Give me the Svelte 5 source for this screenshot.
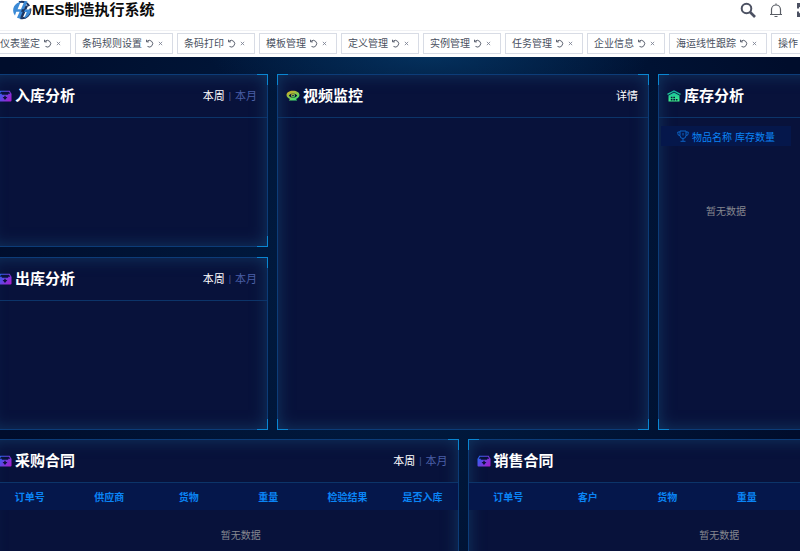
<script lang="ts">
  interface Panel {
    title: string;
    icon: string;
    area: string;
    columns?: string[];
    period?: boolean;
  }

  const tabs: string[] = [
    '仪表鉴定',
    '条码规则设置',
    '条码打印',
    '模板管理',
    '定义管理',
    '实例管理',
    '任务管理',
    '企业信息',
    '海运线性跟踪',
    '操作',
  ];

  const panels: Panel[] = [
    { title: '入库分析', icon: 'box', area: 'inbound', period: true },
    { title: '出库分析', icon: 'box', area: 'outbound', period: true },
    { title: '视频监控', icon: 'eye', area: 'video' },
    { title: '库存分析', icon: 'store', area: 'stock' },
  ];

  const contracts: Panel[] = [
    {
      title: '采购合同',
      icon: 'box',
      area: 'purchase',
      period: true,
      columns: ['订单号', '供应商', '货物', '重量', '检验结果', '是否入库'],
    },
    {
      title: '销售合同',
      icon: 'box',
      area: 'sales',
      columns: ['订单号', '客户', '货物', '重量', '', ''],
    },
  ];

  let openTabs = $state(tabs);
  let periods = $state<Record<string, string>>({});

  function closeTab(name: string) {
    openTabs = openTabs.filter(tab => tab !== name);
  }
</script>

{#snippet panelIcon(name: string)}
  {#if name === 'box'}
    <svg class="panel-icon" viewBox="0 0 14 12" aria-hidden="true">
      <defs>
        <linearGradient id="violet" gradientUnits="userSpaceOnUse" x1="0" y1="2" x2="13" y2="11">
          <stop offset="0" stop-color="#1f6cf5" />
          <stop offset="0.5" stop-color="#6a40e0" />
          <stop offset="1" stop-color="#a91bcb" />
        </linearGradient>
      </defs>
      <path fill="none" stroke="url(#violet)" stroke-width="1.1" d="M1 4.200 2.600 1.300h8.800L13 4.200" />
      <path fill="url(#violet)" d="M.5 3.800h3.300v.900h6.400v-.900h3.300v6.800a.9.9 0 0 1-.9.9H1.400a.9.9 0 0 1-.9-.9z" />
      <path fill="#0a123c" d="M6.300 5.800h1.400v1.300h1.700L7 9.900 4.600 7.100h1.700z" />
    </svg>
  {:else if name === 'eye'}
    <svg class="panel-icon" viewBox="0 0 14 12" aria-hidden="true">
      <defs>
        <linearGradient id="lime" x1="0" y1="0" x2="0.6" y2="1">
          <stop offset="0" stop-color="#e0a51c" />
          <stop offset="1" stop-color="#41e070" />
        </linearGradient>
      </defs>
      <path fill="url(#lime)" d="M7 .8c3.700 0 6.500 1.800 6.500 4.300 0 1.800-1.400 3.200-3.500 3.800l1.200 1.600H2.800L4 8.900C1.900 8.300.5 6.900.5 5.100.5 2.600 3.300.8 7 .8z" />
      <path fill="#0a123c" d="M2.800 5.600C4.600 2.700 9.400 2.700 11.200 5.600 9.400 8.500 4.600 8.500 2.800 5.600z" />
      <circle cx="7" cy="5.600" r="2" fill="url(#lime)" />
      <circle cx="7" cy="5.600" r=".8" fill="#0a123c" />
    </svg>
  {:else}
    <svg class="panel-icon" viewBox="0 0 14 12" aria-hidden="true">
      <defs>
        <linearGradient id="mint" gradientUnits="userSpaceOnUse" x1="0" y1="1" x2="0" y2="11">
          <stop offset="0" stop-color="#12b5a0" />
          <stop offset="1" stop-color="#3df08a" />
        </linearGradient>
      </defs>
      <path fill="none" stroke="url(#mint)" stroke-width="1.200" d="M.5 4.400 7 1l6.500 3.400" />
      <path fill="url(#mint)" d="M7 2.500 12.500 5.400V11.400H1.500V5.400z" />
      <path fill="#0a123c" d="M3.800 6.800h1.700v1.500H3.800zM6.300 6.800H8v1.500H6.300zM3.800 9h1.700v1.400H3.800zM6.300 9H8v1.400H6.300zM8.800 9h1.700v1.400H8.800z" />
    </svg>
  {/if}
{/snippet}

{#snippet panelHead(panel: Panel)}
  <header class="panel-head">
    {@render panelIcon(panel.icon)}
    <h2>{panel.title}</h2>
    {#if panel.period}
      <div class="period">
        {#each ['本周', '本月'] as label, i}
          {#if i > 0}<span class="divider">|</span>{/if}
          <button
            class="link"
            class:active={(periods[panel.area] ?? '本周') === label}
            onclick={() => (periods[panel.area] = label)}
          >{label}</button>
        {/each}
      </div>
    {:else if panel.area === 'video'}
      <a class="link active detail" href="#detail">详情</a>
    {/if}
  </header>
{/snippet}

<div class="page">
  <header class="topbar">
    <svg class="logo" viewBox="0 0 20 20" aria-hidden="true">
      <path fill="none" stroke="#1c3561" stroke-width="2" d="M7 2.200A8.300 8.300 0 0 1 17.200 6M18.200 8.500A8.300 8.300 0 0 1 8 18" />
      <path fill="#3b8ad6" d="M5 3.200 8.800 1.500 5.600 9.300H9l3.400-8h3L8.600 18.800 5 17.800l2.600-6H4.200L3 15.400C-.3 11 1 6 5 3.200z" />
      <path fill="#1c3561" d="M13.600 5.500h2.600l-5.500 12.300H8.200l2.500-6H9l1-2.500h2z" />
      <path fill="#3b8ad6" d="M13 9.500h5.600c0 4-2.500 7.500-6.400 8.800l2.500-6.200H12z" />
    </svg>
    <h1>MES制造执行系统</h1>
    <div class="tools">
      <button aria-label="搜索">
        <svg viewBox="0 0 16 16"><circle cx="6.500" cy="6.500" r="4.800" fill="none" stroke="#4c5162" stroke-width="2" /><path d="M10 10l5 5" stroke="#4c5162" stroke-width="2.600" /></svg>
      </button>
      <button aria-label="通知">
        <svg viewBox="0 0 16 16"><path fill="none" stroke="#5a5e66" stroke-width="1.200" d="M2 12.500h12M3.500 12.500V7.500a4.500 4.500 0 0 1 9 0v5M8 3V1.500M6.500 14.500h3" /></svg>
      </button>
      <button aria-label="全屏">
        <svg viewBox="0 0 16 16"><path fill="none" stroke="#4c5162" stroke-width="2" d="M2 6.500V2h4.500M2 2l4.500 4.500M14 6.500V2H9.500M14 2 9.500 6.500M2 9.500V14h4.500M2 14l4.500-4.500M14 9.500V14H9.500M14 14 9.500 9.500" /></svg>
      </button>
    </div>
  </header>

  <nav class="tabs">
    {#each openTabs as tab (tab)}
      <div class="tab">
        <a href="#tab">{tab}</a>
        <button aria-label="刷新">
          <svg class="reload" viewBox="0 0 10 10"><path fill="none" stroke="#495060" d="M2.200 2.600A3.700 3.700 0 1 1 2.800 8.300M1.700.800v2.400h2.600" /></svg>
        </button>
        <button aria-label="关闭" onclick={() => closeTab(tab)}>
          <svg class="close" viewBox="0 0 6 6"><path stroke="#7a8090" d="M1 1l4 4M5 1 1 5" /></svg>
        </button>
      </div>
    {/each}
  </nav>

  <main class="dashboard">
    <div class="overview">
      {#each panels as panel (panel.area)}
        <section class="panel {panel.area}">
          {@render panelHead(panel)}
          {#if panel.area === 'stock'}
            <div class="stock-list">
              <div class="stock-title">
                <svg viewBox="0 0 12 12" aria-hidden="true"><path fill="none" stroke="#0d62c4" d="M3 1h6v4.500a3 3 0 0 1-6 0zM3 2H.8v1.500A2 2 0 0 0 3 5.500M9 2h2.200v1.500A2 2 0 0 1 9 5.500M6 8.500v2.500M3.500 11.300h5M6 3v2.500" /></svg>
                物品名称 库存数量
              </div>
              <p class="empty">暂无数据</p>
            </div>
          {/if}
          <i class="corners"></i>
        </section>
      {/each}
    </div>

    <div class="contracts">
      {#each contracts as panel (panel.area)}
        <section class="panel">
          {@render panelHead(panel)}
          <table>
            <thead>
              <tr>
                {#each panel.columns ?? [] as column}
                  <th>{column}</th>
                {/each}
              </tr>
            </thead>
            <tbody>
              <tr><td class="empty" colspan="6">暂无数据</td></tr>
            </tbody>
          </table>
          <i class="corners"></i>
        </section>
      {/each}
    </div>
  </main>
</div>

<style>
  :global(body) {
    margin: 0;
    background: #000d2c;
  }

  .page {
    display: flex;
    flex-direction: column;
    height: 100vh;
    overflow: hidden;
    font-family: "Liberation Sans", "Noto Sans CJK SC", sans-serif;
    font-size: 10px;
    color: #fff;
  }

  h1, h2, p {
    margin: 0;
  }

  button {
    display: flex;
    padding: 0;
    border: none;
    background: none;
    font: inherit;
    cursor: pointer;
  }

  a {
    color: inherit;
    text-decoration: none;
  }

  .topbar {
    display: flex;
    flex: none;
    align-items: center;
    box-sizing: border-box;
    height: 30px;
    padding: 0 0 10px 12px;
    background: #fff;
    color: #0b0b0b;
  }

  .logo {
    width: 20px;
    height: 20px;
  }

  h1 {
    font-size: 15px;
    line-height: 20px;
  }

  .tools {
    display: flex;
    gap: 12px;
    margin-left: auto;
    margin-right: -12px;
  }

  .tools svg {
    width: 16px;
    height: 16px;
  }

  .tabs {
    display: flex;
    flex: none;
    gap: 4px;
    box-sizing: border-box;
    height: 27px;
    padding: 2px 0 3px;
    margin-left: -7px;
    border-top: 1px solid #f0f1f4;
    background: #fff;
  }

  .tab {
    display: flex;
    flex: none;
    align-items: center;
    padding: 0 9px 0 6px;
    border: 1px solid #d8dce5;
    color: #495060;
    line-height: 20px;
  }

  .reload {
    width: 9px;
    height: 9px;
    margin: 0 4px 0 3px;
  }

  .close {
    width: 5px;
    height: 5px;
  }

  .dashboard {
    display: flex;
    flex: 1;
    flex-direction: column;
    gap: 9px;
    min-height: 0;
    padding-top: 17px;
    background:
      radial-gradient(ellipse 220px 50px at 430px 0, #04305c, transparent),
      radial-gradient(ellipse 420px 500px at 400px 200px, #001e44, #000d2c);
  }

  /* the board is wider than the window and runs off on both sides */
  .overview,
  .contracts {
    display: grid;
    gap: 10px 9px;
    width: calc(100% + 148px);
    margin-left: -11px;
  }

  .overview {
    flex: none;
    grid-template: "inbound video stock" 173px "outbound video stock" 173px / 3fr 4fr 3fr;
  }

  .contracts {
    flex: none;
    grid-template-columns: 1fr 1fr;
  }

  .contracts .panel {
    min-height: 174px;
  }

  .inbound {
    grid-area: inbound;
  }

  .outbound {
    grid-area: outbound;
  }

  .video {
    grid-area: video;
  }

  .stock {
    grid-area: stock;
  }

  .panel {
    position: relative;
    box-sizing: border-box;
    border: 1px solid #0c3c78;
    background: #08123b;
    box-shadow: inset 0 0 16px #123761;
  }

  /* bright brackets over the four corners of the frame */
  .corners {
    position: absolute;
    inset: -1px;
    pointer-events: none;
    --c: #0a86d2;
    background:
      linear-gradient(var(--c), var(--c)) 0 0 / 11px 1px,
      linear-gradient(var(--c), var(--c)) 0 0 / 1px 11px,
      linear-gradient(var(--c), var(--c)) 100% 0 / 11px 1px,
      linear-gradient(var(--c), var(--c)) 100% 0 / 1px 11px,
      linear-gradient(var(--c), var(--c)) 0 100% / 11px 1px,
      linear-gradient(var(--c), var(--c)) 0 100% / 1px 11px,
      linear-gradient(var(--c), var(--c)) 100% 100% / 11px 1px,
      linear-gradient(var(--c), var(--c)) 100% 100% / 1px 11px;
    background-repeat: no-repeat;
  }

  .panel-head {
    display: flex;
    align-items: center;
    box-sizing: border-box;
    height: 43px;
    padding: 0 10px 0 8px;
    border-bottom: 1px solid #0c3469;
  }

  .panel-icon {
    width: 14px;
    height: 12px;
    margin-right: 3px;
  }

  h2 {
    font-size: 15px;
    line-height: 20px;
  }

  .period {
    display: flex;
    align-items: center;
    gap: 4px;
    margin-left: auto;
  }

  .divider {
    color: #4459a0;
    font-size: 9px;
  }

  .link {
    color: #4a5fa6;
    font-size: 11px;
    line-height: 16px;
  }

  .link.active {
    color: #fff;
  }

  .detail {
    margin-left: auto;
  }

  .stock-list {
    width: 130px;
    margin: 8px 0 0 2px;
  }

  .stock-title {
    display: flex;
    align-items: center;
    justify-content: center;
    gap: 3px;
    height: 20px;
    background: #05174b;
    color: #0c84f5;
  }

  .stock-title svg {
    width: 12px;
    height: 12px;
  }

  .empty {
    color: #85878f;
    text-align: center;
  }

  .stock-list .empty {
    padding-top: 57px;
  }

  table {
    width: 100%;
    border-collapse: collapse;
    table-layout: fixed;
  }

  th {
    width: 17%;
    height: 27px;
    padding: 0;
    background: #05174b;
    color: #0a84f5;
    font-weight: bold;
  }

  th:last-child {
    width: 15%;
  }

  td.empty {
    height: 48px;
    padding: 0 0 0 34px;
  }
</style>
